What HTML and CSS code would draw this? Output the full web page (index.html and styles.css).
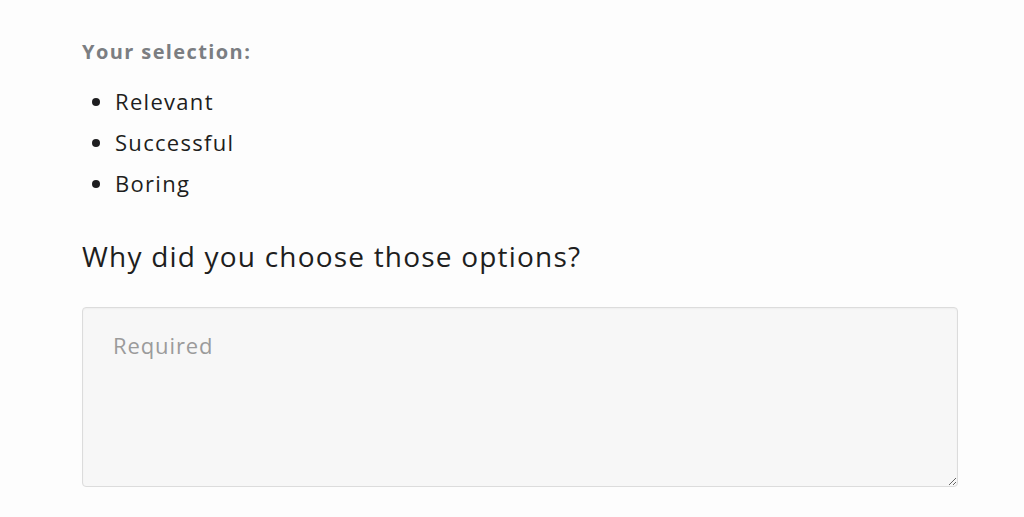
FILE: index.html
```html
<!DOCTYPE html>
<html lang="en">
<head>
<meta charset="utf-8">
<title>Feedback</title>
<link rel="stylesheet" href="styles.css">
</head>
<body>
<main class="form">
  <h3 class="selection-label">Your selection:</h3>
  <ul class="selection-list">
    <li>Relevant</li>
    <li>Successful</li>
    <li>Boring</li>
  </ul>
  <label class="question" for="why">Why did you choose those options?</label>
  <textarea id="why" class="answer" placeholder="Required"></textarea>
</main>
</body>
</html>
```
FILE: styles.css
```css
html, body {
  margin: 0;
  padding: 0;
  background: #fdfdfd;
}
body {
  font-family: "Open Sans", "Lato", sans-serif;
  color: #1e1e20;
}
.form {
  display: flex;
  flex-direction: column;
  padding: 40px 66px 0 82px;
}
.selection-label {
  margin: 0;
  font-size: 20px;
  line-height: 24px;
  font-weight: 700;
  letter-spacing: 1.4px;
  color: #7b7e82;
}
.selection-list {
  margin: 17px 0 0;
  padding: 0 0 0 33px;
  font-size: 22px;
  line-height: 41px;
  letter-spacing: 1.3px;
}
.question {
  margin-top: 35px;
  font-size: 28px;
  line-height: 34px;
  letter-spacing: 1.2px;
  color: #1e1e20;
}
.answer {
  margin-top: 34px;
  box-sizing: border-box;
  width: 876px;
  height: 180px;
  padding: 23px 30px;
  font-family: inherit;
  font-size: 22px;
  line-height: 28px;
  letter-spacing: 0.9px;
  color: #1e1e20;
  background: #f7f7f7;
  border: 1px solid #dcdcdc;
  border-radius: 4px;
  box-shadow: inset 0 1px 2px rgba(0, 0, 0, 0.04);
  outline: none;
}
.answer::placeholder {
  color: #9b9b9b;
}
```
